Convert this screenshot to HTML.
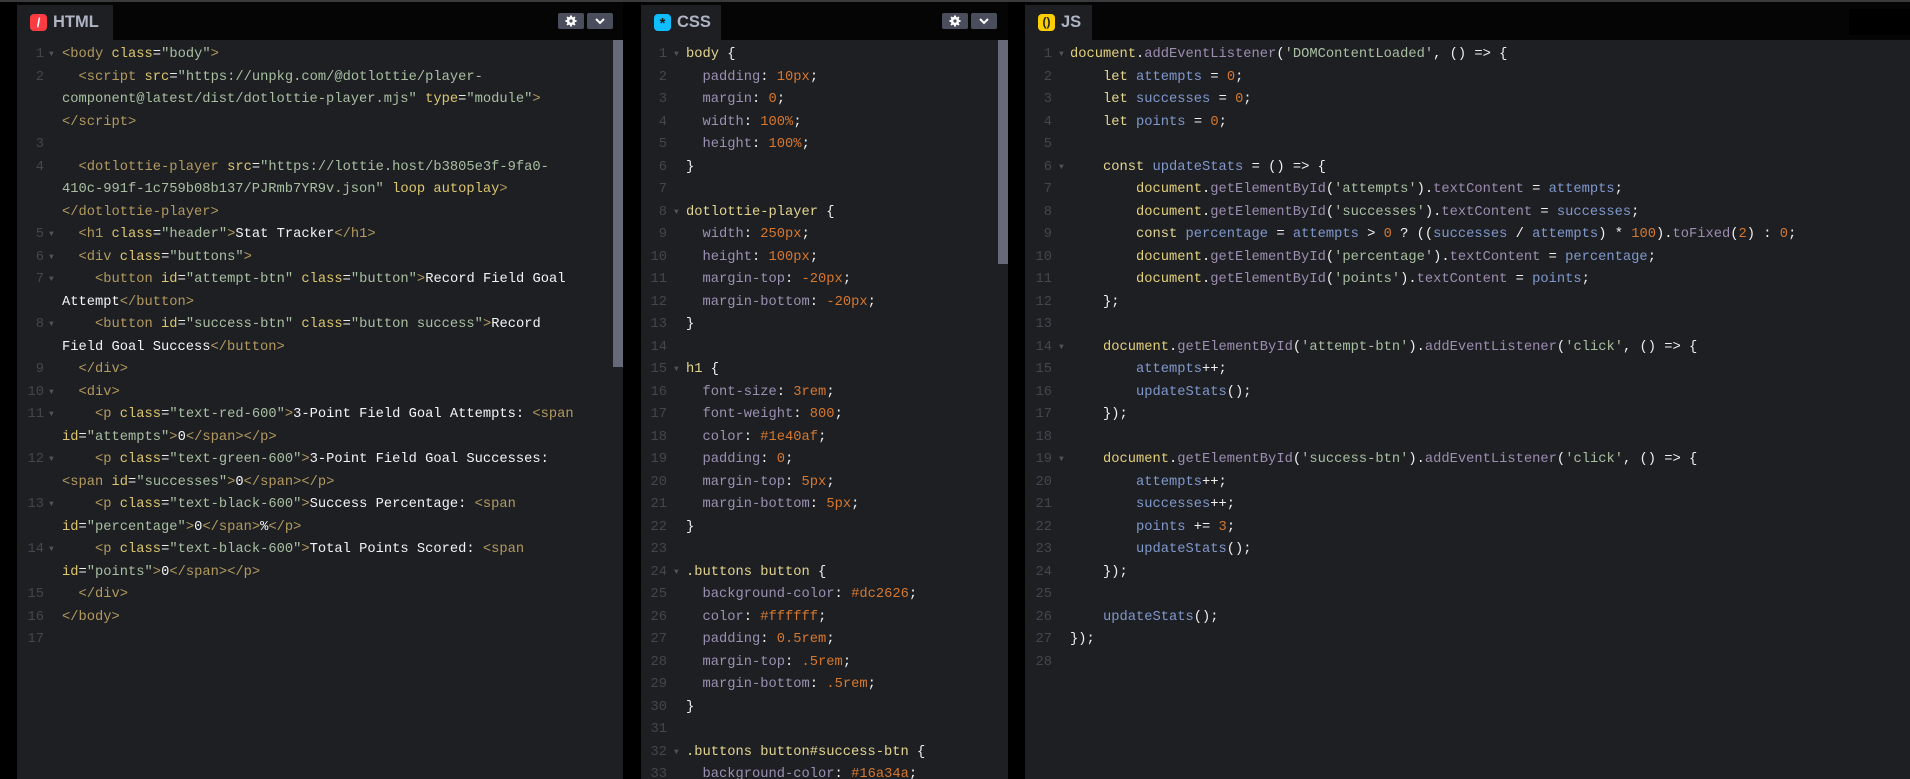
<!DOCTYPE html>
<html><head><meta charset="utf-8"><style>
*{margin:0;padding:0;box-sizing:border-box}
html,body{width:1910px;height:779px;overflow:hidden}
body{background:#000;position:relative;font-family:"Liberation Mono",monospace}
.topline{position:absolute;left:0;top:0;width:1910px;height:2px;background:#3a3a3c}
.panel{position:absolute;top:2px;height:777px;background:#1e1f23;overflow:hidden}
.hdr{position:absolute;left:0;top:0;right:0;height:38px;background:#050505}
.tab{position:absolute;top:3px;height:35px;background:#1e1f23;font-family:"Liberation Sans",sans-serif;font-weight:bold;font-size:16.5px;color:#aeb4c4}
.tab .ic{position:absolute;left:13px;top:9px;width:17px;height:17px;border-radius:4px;text-align:center;font-size:13px;line-height:17px}
.tab .tx{position:absolute;left:36px;top:8px}
.btn{position:absolute;top:11px;width:26px;height:16px;background:#4a4d5c;border-radius:2px}
.sb{position:absolute;top:38px;width:10px;background:#666a78}
.code{position:absolute;top:42px;left:0;right:0;font-size:13.75px;line-height:22.5px;white-space:normal;color:#ececec}
.r{position:relative;height:22.5px}
.ln{position:absolute;width:30px;text-align:right;color:#44464e}
.ar{position:absolute;color:#50525a;font-size:8px}
.c{position:absolute;white-space:pre}
.g{color:#b39a5f}.a{color:#dcc66e}.s{color:#a9bfa2}.w{color:#f4f4f4}
.k{color:#e3d58f}.o{color:#e3d07a}.m{color:#9d8db0}.v{color:#8098cc}.n{color:#d6782e}.p{color:#9c90b2}
</style></head><body>
<div class="topline"></div>

<!-- HTML panel -->
<div class="panel" style="left:17px;width:606px">
<div class="hdr"></div>
<div class="tab" style="left:0;width:96px"><div class="ic" style="background:#ff3c41;color:#fff">/</div><div class="tx">HTML</div></div>
<div class="btn" style="left:541px"><svg width="26" height="16"><circle cx="13" cy="8" r="4.2" fill="#fff"/><g stroke="#fff" stroke-width="2"><line x1="13" y1="2.5" x2="13" y2="13.5"/><line x1="7.5" y1="8" x2="18.5" y2="8"/><line x1="9.1" y1="4.1" x2="16.9" y2="11.9"/><line x1="16.9" y1="4.1" x2="9.1" y2="11.9"/></g><circle cx="13" cy="8" r="1.6" fill="#4a4d5c"/></svg></div>
<div class="btn" style="left:570px"><svg width="26" height="16"><path d="M9 6l4 4 4-4" stroke="#fff" stroke-width="2" fill="none"/></svg></div>
<div class="sb" style="left:596px;height:327px"></div>
<div class="code">
<div class="r"><span class="ln" style="left:-3px">1</span><span class="ar" style="left:32px">▼</span><span class="c" style="left:45px"><span class="g">&lt;body</span> <span class="a">class</span>=<span class="s">"body"</span><span class="g">&gt;</span></span></div>
<div class="r"><span class="ln" style="left:-3px">2</span><span class="c" style="left:45px">  <span class="g">&lt;script</span> <span class="a">src</span>=<span class="s">"https://unpkg.com/@dotlottie/player-</span></span></div>
<div class="r"><span class="c" style="left:45px"><span class="s">component@latest/dist/dotlottie-player.mjs"</span> <span class="a">type</span>=<span class="s">"module"</span><span class="g">&gt;</span></span></div>
<div class="r"><span class="c" style="left:45px"><span class="g">&lt;/script&gt;</span></span></div>
<div class="r"><span class="ln" style="left:-3px">3</span></div>
<div class="r"><span class="ln" style="left:-3px">4</span><span class="c" style="left:45px">  <span class="g">&lt;dotlottie-player</span> <span class="a">src</span>=<span class="s">"https://lottie.host/b3805e3f-9fa0-</span></span></div>
<div class="r"><span class="c" style="left:45px"><span class="s">410c-991f-1c759b08b137/PJRmb7YR9v.json"</span> <span class="a">loop autoplay</span><span class="g">&gt;</span></span></div>
<div class="r"><span class="c" style="left:45px"><span class="g">&lt;/dotlottie-player&gt;</span></span></div>
<div class="r"><span class="ln" style="left:-3px">5</span><span class="ar" style="left:32px">▼</span><span class="c" style="left:45px">  <span class="g">&lt;h1</span> <span class="a">class</span>=<span class="s">"header"</span><span class="g">&gt;</span><span class="w">Stat Tracker</span><span class="g">&lt;/h1&gt;</span></span></div>
<div class="r"><span class="ln" style="left:-3px">6</span><span class="ar" style="left:32px">▼</span><span class="c" style="left:45px">  <span class="g">&lt;div</span> <span class="a">class</span>=<span class="s">"buttons"</span><span class="g">&gt;</span></span></div>
<div class="r"><span class="ln" style="left:-3px">7</span><span class="ar" style="left:32px">▼</span><span class="c" style="left:45px">    <span class="g">&lt;button</span> <span class="a">id</span>=<span class="s">"attempt-btn"</span> <span class="a">class</span>=<span class="s">"button"</span><span class="g">&gt;</span><span class="w">Record Field Goal</span></span></div>
<div class="r"><span class="c" style="left:45px"><span class="w">Attempt</span><span class="g">&lt;/button&gt;</span></span></div>
<div class="r"><span class="ln" style="left:-3px">8</span><span class="ar" style="left:32px">▼</span><span class="c" style="left:45px">    <span class="g">&lt;button</span> <span class="a">id</span>=<span class="s">"success-btn"</span> <span class="a">class</span>=<span class="s">"button success"</span><span class="g">&gt;</span><span class="w">Record</span></span></div>
<div class="r"><span class="c" style="left:45px"><span class="w">Field Goal Success</span><span class="g">&lt;/button&gt;</span></span></div>
<div class="r"><span class="ln" style="left:-3px">9</span><span class="c" style="left:45px">  <span class="g">&lt;/div&gt;</span></span></div>
<div class="r"><span class="ln" style="left:-3px">10</span><span class="ar" style="left:32px">▼</span><span class="c" style="left:45px">  <span class="g">&lt;div&gt;</span></span></div>
<div class="r"><span class="ln" style="left:-3px">11</span><span class="ar" style="left:32px">▼</span><span class="c" style="left:45px">    <span class="g">&lt;p</span> <span class="a">class</span>=<span class="s">"text-red-600"</span><span class="g">&gt;</span><span class="w">3-Point Field Goal Attempts: </span><span class="g">&lt;span</span></span></div>
<div class="r"><span class="c" style="left:45px"><span class="a">id</span>=<span class="s">"attempts"</span><span class="g">&gt;</span><span class="w">0</span><span class="g">&lt;/span&gt;&lt;/p&gt;</span></span></div>
<div class="r"><span class="ln" style="left:-3px">12</span><span class="ar" style="left:32px">▼</span><span class="c" style="left:45px">    <span class="g">&lt;p</span> <span class="a">class</span>=<span class="s">"text-green-600"</span><span class="g">&gt;</span><span class="w">3-Point Field Goal Successes:</span></span></div>
<div class="r"><span class="c" style="left:45px"><span class="g">&lt;span</span> <span class="a">id</span>=<span class="s">"successes"</span><span class="g">&gt;</span><span class="w">0</span><span class="g">&lt;/span&gt;&lt;/p&gt;</span></span></div>
<div class="r"><span class="ln" style="left:-3px">13</span><span class="ar" style="left:32px">▼</span><span class="c" style="left:45px">    <span class="g">&lt;p</span> <span class="a">class</span>=<span class="s">"text-black-600"</span><span class="g">&gt;</span><span class="w">Success Percentage: </span><span class="g">&lt;span</span></span></div>
<div class="r"><span class="c" style="left:45px"><span class="a">id</span>=<span class="s">"percentage"</span><span class="g">&gt;</span><span class="w">0</span><span class="g">&lt;/span&gt;</span><span class="w">%</span><span class="g">&lt;/p&gt;</span></span></div>
<div class="r"><span class="ln" style="left:-3px">14</span><span class="ar" style="left:32px">▼</span><span class="c" style="left:45px">    <span class="g">&lt;p</span> <span class="a">class</span>=<span class="s">"text-black-600"</span><span class="g">&gt;</span><span class="w">Total Points Scored: </span><span class="g">&lt;span</span></span></div>
<div class="r"><span class="c" style="left:45px"><span class="a">id</span>=<span class="s">"points"</span><span class="g">&gt;</span><span class="w">0</span><span class="g">&lt;/span&gt;&lt;/p&gt;</span></span></div>
<div class="r"><span class="ln" style="left:-3px">15</span><span class="c" style="left:45px">  <span class="g">&lt;/div&gt;</span></span></div>
<div class="r"><span class="ln" style="left:-3px">16</span><span class="c" style="left:45px"><span class="g">&lt;/body&gt;</span></span></div>
<div class="r"><span class="ln" style="left:-3px">17</span></div>
</div>
</div>

<!-- CSS panel -->
<div class="panel" style="left:641px;width:367px">
<div class="hdr"></div>
<div class="tab" style="left:0;width:80px"><div class="ic" style="background:#0ebeff;color:#1a1a1a;font-size:15px;line-height:20px">*</div><div class="tx">CSS</div></div>
<div class="btn" style="left:301px"><svg width="26" height="16"><circle cx="13" cy="8" r="4.2" fill="#fff"/><g stroke="#fff" stroke-width="2"><line x1="13" y1="2.5" x2="13" y2="13.5"/><line x1="7.5" y1="8" x2="18.5" y2="8"/><line x1="9.1" y1="4.1" x2="16.9" y2="11.9"/><line x1="16.9" y1="4.1" x2="9.1" y2="11.9"/></g><circle cx="13" cy="8" r="1.6" fill="#4a4d5c"/></svg></div>
<div class="btn" style="left:330px"><svg width="26" height="16"><path d="M9 6l4 4 4-4" stroke="#fff" stroke-width="2" fill="none"/></svg></div>
<div class="sb" style="left:357px;height:224px"></div>
<div class="code" style="color:#f0f0f0">
<div class="r"><span class="ln" style="left:-4px">1</span><span class="ar" style="left:33px">▼</span><span class="c" style="left:45px"><span class="k">body</span> {</span></div>
<div class="r"><span class="ln" style="left:-4px">2</span><span class="c" style="left:45px">  <span class="p">padding</span>: <span class="n">10px</span>;</span></div>
<div class="r"><span class="ln" style="left:-4px">3</span><span class="c" style="left:45px">  <span class="p">margin</span>: <span class="n">0</span>;</span></div>
<div class="r"><span class="ln" style="left:-4px">4</span><span class="c" style="left:45px">  <span class="p">width</span>: <span class="n">100%</span>;</span></div>
<div class="r"><span class="ln" style="left:-4px">5</span><span class="c" style="left:45px">  <span class="p">height</span>: <span class="n">100%</span>;</span></div>
<div class="r"><span class="ln" style="left:-4px">6</span><span class="c" style="left:45px">}</span></div>
<div class="r"><span class="ln" style="left:-4px">7</span></div>
<div class="r"><span class="ln" style="left:-4px">8</span><span class="ar" style="left:33px">▼</span><span class="c" style="left:45px"><span class="k">dotlottie-player</span> {</span></div>
<div class="r"><span class="ln" style="left:-4px">9</span><span class="c" style="left:45px">  <span class="p">width</span>: <span class="n">250px</span>;</span></div>
<div class="r"><span class="ln" style="left:-4px">10</span><span class="c" style="left:45px">  <span class="p">height</span>: <span class="n">100px</span>;</span></div>
<div class="r"><span class="ln" style="left:-4px">11</span><span class="c" style="left:45px">  <span class="p">margin-top</span>: <span class="n">-20px</span>;</span></div>
<div class="r"><span class="ln" style="left:-4px">12</span><span class="c" style="left:45px">  <span class="p">margin-bottom</span>: <span class="n">-20px</span>;</span></div>
<div class="r"><span class="ln" style="left:-4px">13</span><span class="c" style="left:45px">}</span></div>
<div class="r"><span class="ln" style="left:-4px">14</span></div>
<div class="r"><span class="ln" style="left:-4px">15</span><span class="ar" style="left:33px">▼</span><span class="c" style="left:45px"><span class="k">h1</span> {</span></div>
<div class="r"><span class="ln" style="left:-4px">16</span><span class="c" style="left:45px">  <span class="p">font-size</span>: <span class="n">3rem</span>;</span></div>
<div class="r"><span class="ln" style="left:-4px">17</span><span class="c" style="left:45px">  <span class="p">font-weight</span>: <span class="n">800</span>;</span></div>
<div class="r"><span class="ln" style="left:-4px">18</span><span class="c" style="left:45px">  <span class="p">color</span>: <span class="n">#1e40af</span>;</span></div>
<div class="r"><span class="ln" style="left:-4px">19</span><span class="c" style="left:45px">  <span class="p">padding</span>: <span class="n">0</span>;</span></div>
<div class="r"><span class="ln" style="left:-4px">20</span><span class="c" style="left:45px">  <span class="p">margin-top</span>: <span class="n">5px</span>;</span></div>
<div class="r"><span class="ln" style="left:-4px">21</span><span class="c" style="left:45px">  <span class="p">margin-bottom</span>: <span class="n">5px</span>;</span></div>
<div class="r"><span class="ln" style="left:-4px">22</span><span class="c" style="left:45px">}</span></div>
<div class="r"><span class="ln" style="left:-4px">23</span></div>
<div class="r"><span class="ln" style="left:-4px">24</span><span class="ar" style="left:33px">▼</span><span class="c" style="left:45px"><span class="k">.buttons button</span> {</span></div>
<div class="r"><span class="ln" style="left:-4px">25</span><span class="c" style="left:45px">  <span class="p">background-color</span>: <span class="n">#dc2626</span>;</span></div>
<div class="r"><span class="ln" style="left:-4px">26</span><span class="c" style="left:45px">  <span class="p">color</span>: <span class="n">#ffffff</span>;</span></div>
<div class="r"><span class="ln" style="left:-4px">27</span><span class="c" style="left:45px">  <span class="p">padding</span>: <span class="n">0.5rem</span>;</span></div>
<div class="r"><span class="ln" style="left:-4px">28</span><span class="c" style="left:45px">  <span class="p">margin-top</span>: <span class="n">.5rem</span>;</span></div>
<div class="r"><span class="ln" style="left:-4px">29</span><span class="c" style="left:45px">  <span class="p">margin-bottom</span>: <span class="n">.5rem</span>;</span></div>
<div class="r"><span class="ln" style="left:-4px">30</span><span class="c" style="left:45px">}</span></div>
<div class="r"><span class="ln" style="left:-4px">31</span></div>
<div class="r"><span class="ln" style="left:-4px">32</span><span class="ar" style="left:33px">▼</span><span class="c" style="left:45px"><span class="k">.buttons button#success-btn</span> {</span></div>
<div class="r"><span class="ln" style="left:-4px">33</span><span class="c" style="left:45px">  <span class="p">background-color</span>: <span class="n">#16a34a</span>;</span></div>
</div>
</div>

<!-- JS panel -->
<div class="panel" style="left:1025px;width:885px">
<div class="hdr"></div>
<div style="position:absolute;left:824px;top:7px;width:61px;height:26px;background:#000"></div>
<div class="tab" style="left:0;width:67px"><div class="ic" style="background:#fcd000;color:#222;font-size:12px">()</div><div class="tx">JS</div></div>
<div class="code" style="color:#f0f0f0">
<div class="r"><span class="ln" style="left:-3px">1</span><span class="ar" style="left:34px">▼</span><span class="c" style="left:45px"><span class="o">document</span>.<span class="m">addEventListener</span>(<span class="s">'DOMContentLoaded'</span>, () =&gt; {</span></div>
<div class="r"><span class="ln" style="left:-3px">2</span><span class="c" style="left:45px">    <span class="k">let</span> <span class="v">attempts</span> = <span class="n">0</span>;</span></div>
<div class="r"><span class="ln" style="left:-3px">3</span><span class="c" style="left:45px">    <span class="k">let</span> <span class="v">successes</span> = <span class="n">0</span>;</span></div>
<div class="r"><span class="ln" style="left:-3px">4</span><span class="c" style="left:45px">    <span class="k">let</span> <span class="v">points</span> = <span class="n">0</span>;</span></div>
<div class="r"><span class="ln" style="left:-3px">5</span></div>
<div class="r"><span class="ln" style="left:-3px">6</span><span class="ar" style="left:34px">▼</span><span class="c" style="left:45px">    <span class="k">const</span> <span class="v">updateStats</span> = () =&gt; {</span></div>
<div class="r"><span class="ln" style="left:-3px">7</span><span class="c" style="left:45px">        <span class="o">document</span>.<span class="m">getElementById</span>(<span class="s">'attempts'</span>).<span class="m">textContent</span> = <span class="v">attempts</span>;</span></div>
<div class="r"><span class="ln" style="left:-3px">8</span><span class="c" style="left:45px">        <span class="o">document</span>.<span class="m">getElementById</span>(<span class="s">'successes'</span>).<span class="m">textContent</span> = <span class="v">successes</span>;</span></div>
<div class="r"><span class="ln" style="left:-3px">9</span><span class="c" style="left:45px">        <span class="k">const</span> <span class="v">percentage</span> = <span class="v">attempts</span> &gt; <span class="n">0</span> ? ((<span class="v">successes</span> / <span class="v">attempts</span>) * <span class="n">100</span>).<span class="m">toFixed</span>(<span class="n">2</span>) : <span class="n">0</span>;</span></div>
<div class="r"><span class="ln" style="left:-3px">10</span><span class="c" style="left:45px">        <span class="o">document</span>.<span class="m">getElementById</span>(<span class="s">'percentage'</span>).<span class="m">textContent</span> = <span class="v">percentage</span>;</span></div>
<div class="r"><span class="ln" style="left:-3px">11</span><span class="c" style="left:45px">        <span class="o">document</span>.<span class="m">getElementById</span>(<span class="s">'points'</span>).<span class="m">textContent</span> = <span class="v">points</span>;</span></div>
<div class="r"><span class="ln" style="left:-3px">12</span><span class="c" style="left:45px">    };</span></div>
<div class="r"><span class="ln" style="left:-3px">13</span></div>
<div class="r"><span class="ln" style="left:-3px">14</span><span class="ar" style="left:34px">▼</span><span class="c" style="left:45px">    <span class="o">document</span>.<span class="m">getElementById</span>(<span class="s">'attempt-btn'</span>).<span class="m">addEventListener</span>(<span class="s">'click'</span>, () =&gt; {</span></div>
<div class="r"><span class="ln" style="left:-3px">15</span><span class="c" style="left:45px">        <span class="v">attempts</span>++;</span></div>
<div class="r"><span class="ln" style="left:-3px">16</span><span class="c" style="left:45px">        <span class="v">updateStats</span>();</span></div>
<div class="r"><span class="ln" style="left:-3px">17</span><span class="c" style="left:45px">    });</span></div>
<div class="r"><span class="ln" style="left:-3px">18</span></div>
<div class="r"><span class="ln" style="left:-3px">19</span><span class="ar" style="left:34px">▼</span><span class="c" style="left:45px">    <span class="o">document</span>.<span class="m">getElementById</span>(<span class="s">'success-btn'</span>).<span class="m">addEventListener</span>(<span class="s">'click'</span>, () =&gt; {</span></div>
<div class="r"><span class="ln" style="left:-3px">20</span><span class="c" style="left:45px">        <span class="v">attempts</span>++;</span></div>
<div class="r"><span class="ln" style="left:-3px">21</span><span class="c" style="left:45px">        <span class="v">successes</span>++;</span></div>
<div class="r"><span class="ln" style="left:-3px">22</span><span class="c" style="left:45px">        <span class="v">points</span> += <span class="n">3</span>;</span></div>
<div class="r"><span class="ln" style="left:-3px">23</span><span class="c" style="left:45px">        <span class="v">updateStats</span>();</span></div>
<div class="r"><span class="ln" style="left:-3px">24</span><span class="c" style="left:45px">    });</span></div>
<div class="r"><span class="ln" style="left:-3px">25</span></div>
<div class="r"><span class="ln" style="left:-3px">26</span><span class="c" style="left:45px">    <span class="v">updateStats</span>();</span></div>
<div class="r"><span class="ln" style="left:-3px">27</span><span class="c" style="left:45px">});</span></div>
<div class="r"><span class="ln" style="left:-3px">28</span></div>
</div>
</div>
</body></html>
